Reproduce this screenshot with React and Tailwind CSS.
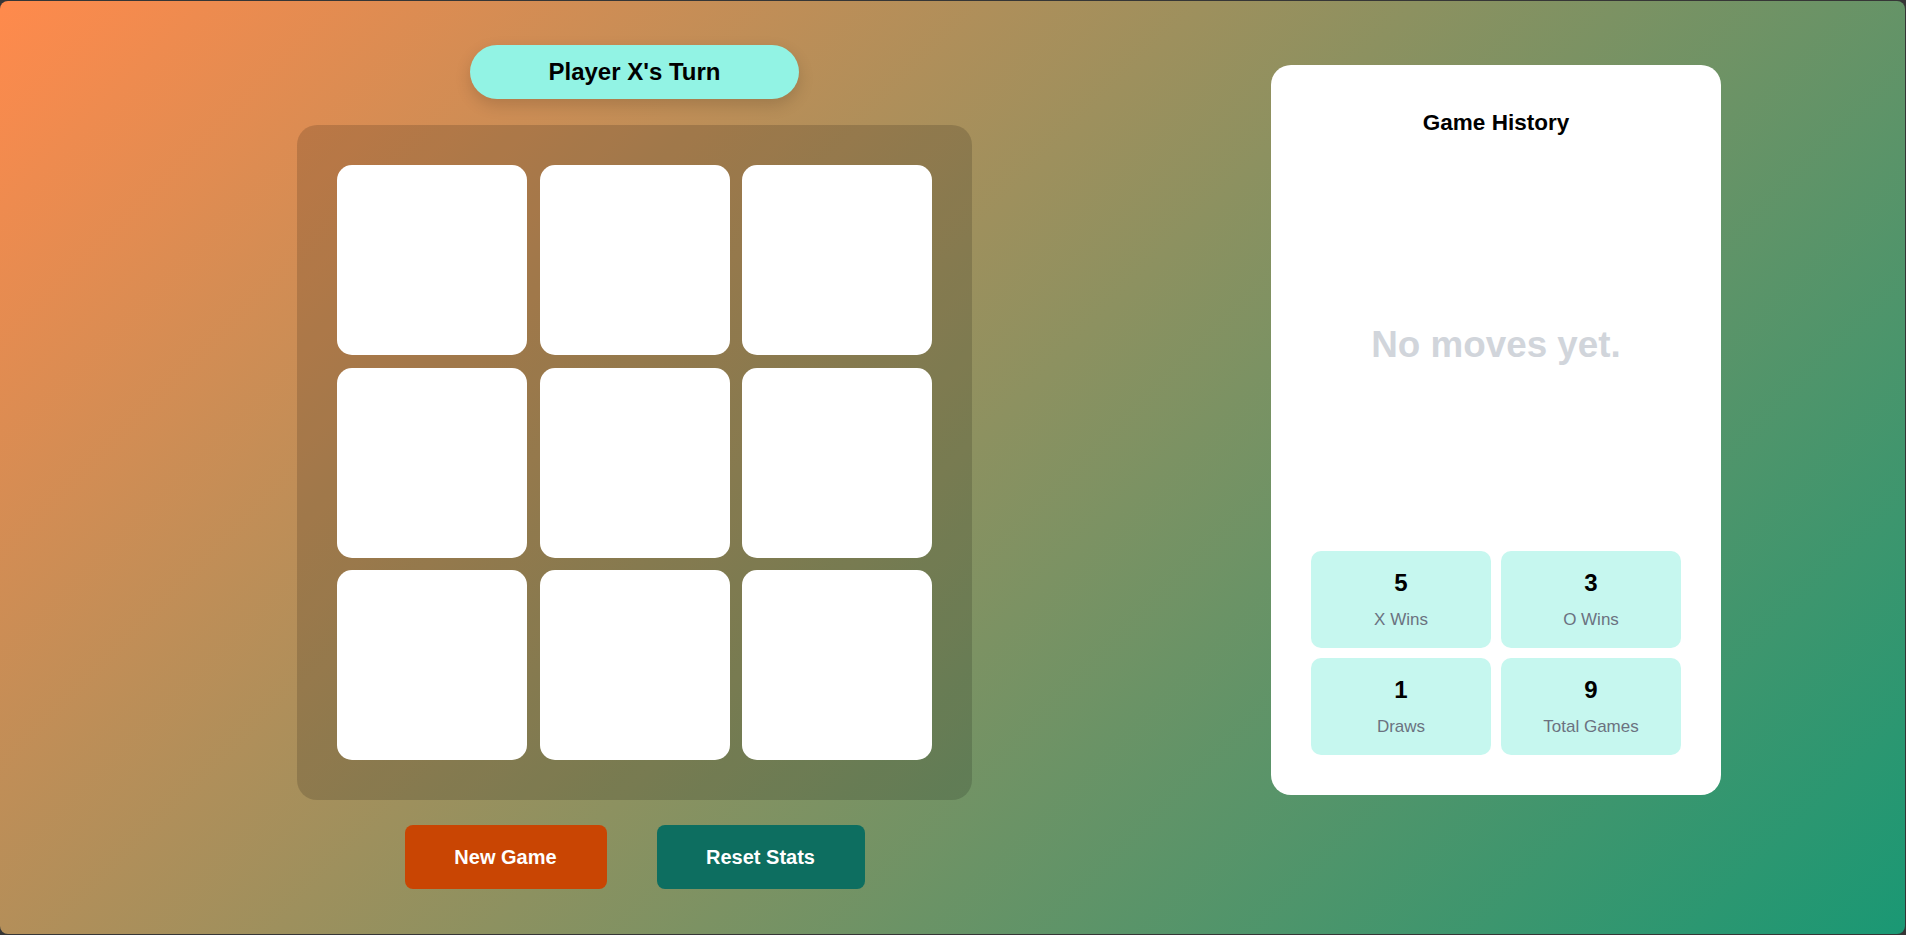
import React from 'react';

const stats = [
  { value: 5, label: 'X Wins' },
  { value: 3, label: 'O Wins' },
  { value: 1, label: 'Draws' },
  { value: 9, label: 'Total Games' },
];

export default function App() {
  const cells = Array(9).fill(null);

  return (
    <div className="bg-[#363636] pt-px pr-px pb-px font-['Liberation_Sans',Arial,sans-serif]">
      <div className="h-[933px] rounded-[8px] bg-[linear-gradient(135deg,#ff8a4c,#1a9874)] flex items-start pl-[297px] gap-[299px]">
        {/* game column */}
        <div className="flex flex-col items-center pt-[44px]">
          <div className="w-[329px] h-[54px] rounded-full bg-[#92f3e4] flex items-center justify-center shadow-[0_6px_16px_rgba(0,0,0,0.15)]">
            <span className="text-[24px] font-bold text-black">Player X's Turn</span>
          </div>

          <div className="mt-[26px] w-[675px] h-[675px] rounded-[20px] bg-black/15 p-[40px] grid grid-cols-3 gap-[12.5px]">
            {cells.map((c, i) => (
              <button key={i} className="bg-white rounded-[15px] h-[190px]" />
            ))}
          </div>

          <div className="mt-[25px] flex gap-[50px]">
            <button className="h-[64px] w-[202px] rounded-[8px] bg-[#c94503] text-white text-[20px] font-bold">
              New Game
            </button>
            <button className="h-[64px] w-[208px] rounded-[8px] bg-[#0d6e60] text-white text-[20px] font-bold">
              Reset Stats
            </button>
          </div>
        </div>

        {/* history panel */}
        <div className="mt-[64px] w-[450px] h-[730px] bg-white rounded-[20px] p-[40px] flex flex-col">
          <h2 className="mt-[4px] text-center text-[22.5px] leading-[27px] font-bold text-black">Game History</h2>
          <div className="flex-1 flex items-center justify-center pt-[2px]">
            <p className="text-[36.8px] font-bold text-[#d1d5db]">No moves yet.</p>
          </div>
          <div className="grid grid-cols-2 gap-[10px]">
            {stats.map((s) => (
              <div key={s.label} className="bg-[#c6f7ef] rounded-[10px] py-[18px] text-center">
                <div className="text-[24px] leading-[28px] font-bold text-black mb-[13px]">{s.value}</div>
                <div className="text-[17px] leading-[20px] text-[#6b7280]">{s.label}</div>
              </div>
            ))}
          </div>
        </div>
      </div>
    </div>
  );
}
